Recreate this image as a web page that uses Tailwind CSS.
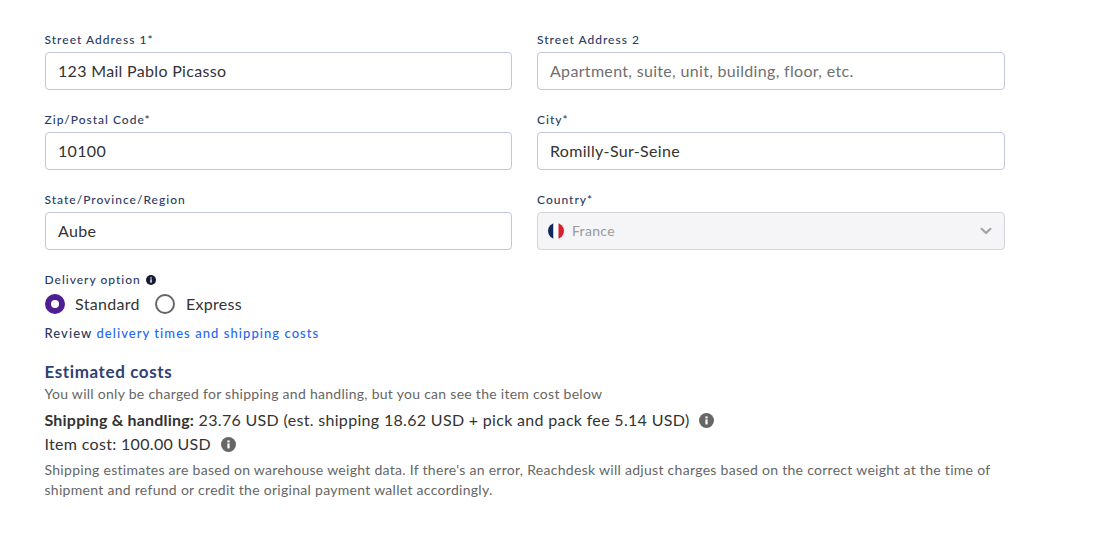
<!DOCTYPE html>
<html lang="en">

<head>
    <meta charset="UTF-8">
    <title>Delivery address</title>
    <script src="https://cdn.jsdelivr.net/npm/@tailwindcss/browser@4"></script>
</head>

<body class="bg-white font-['Lato',sans-serif] text-[#333333]">
    <div class="w-[1104px] h-[538px] overflow-hidden pl-[45px] pt-[32px]">
        <div class="w-[960px] grid grid-cols-[467px_468px] gap-x-[25px] gap-y-[22px]">
            <div>
                <label class="block h-[20px] -ml-[0.5px] text-[12px] leading-[15px] tracking-[1px] font-medium text-[#2a3a63]">Street Address 1*</label>
                <input value="123 Mail Pablo Picasso" class="w-full h-[38px] px-[12px] pb-[2px] border border-[#c1c7de] rounded-[4px] text-[16px] tracking-[0.32px] text-[#333333]">
            </div>
            <div>
                <label class="block h-[20px] text-[12px] leading-[15px] tracking-[1px] font-medium text-[#2a3a63]">Street Address 2</label>
                <input placeholder="Apartment, suite, unit, building, floor, etc." class="w-full h-[38px] px-[12px] pb-[2px] border border-[#c1c7de] rounded-[4px] text-[16px] tracking-[0.32px] placeholder:text-[#6f6f6f]">
            </div>
            <div>
                <label class="block h-[20px] -ml-[0.5px] text-[12px] leading-[15px] tracking-[1px] font-medium text-[#2a3a63]">Zip/Postal Code*</label>
                <input value="10100" class="w-full h-[38px] px-[12px] pb-[2px] border border-[#c1c7de] rounded-[4px] text-[16px] tracking-[0.32px] text-[#333333]">
            </div>
            <div>
                <label class="block h-[20px] text-[12px] leading-[15px] tracking-[1px] font-medium text-[#2a3a63]">City*</label>
                <input value="Romilly-Sur-Seine" class="w-full h-[38px] px-[12px] pb-[2px] border border-[#c1c7de] rounded-[4px] text-[16px] tracking-[0.32px] text-[#333333]">
            </div>
            <div>
                <label class="block h-[20px] -ml-[0.5px] text-[12px] leading-[15px] tracking-[1px] font-medium text-[#2a3a63]">State/Province/Region</label>
                <input value="Aube" class="w-full h-[38px] px-[12px] pb-[2px] border border-[#c1c7de] rounded-[4px] text-[16px] tracking-[0.32px] text-[#333333]">
            </div>
            <div>
                <label class="block h-[20px] text-[12px] leading-[15px] tracking-[1px] font-medium text-[#2a3a63]">Country*</label>
                <div class="h-[38px] pl-[10px] pr-[12px] flex items-center border border-[#d3d5da] rounded-[4px] bg-[#f5f5f7]">
                    <svg class="w-[16px] h-[16px] mr-[8px]" viewBox="0 0 16 16">
                        <clipPath id="flag"><circle cx="8" cy="8" r="8" /></clipPath>
                        <g clip-path="url(#flag)">
                            <rect width="5.5" height="16" fill="#0f2a5c" />
                            <rect x="5.5" width="5" height="16" fill="#ffffff" />
                            <rect x="10.5" width="5.5" height="16" fill="#d8202c" />
                        </g>
                    </svg>
                    <span class="text-[14px] tracking-[0.3px] text-[#9a9a9a] -mt-[1px]">France</span>
                    <svg class="ml-auto w-[12px] h-[8px]" viewBox="0 0 12 8" fill="none" stroke="#a3a3a3" stroke-width="2.2">
                        <path d="M1 1.2 6 6 11 1.2" />
                    </svg>
                </div>
            </div>
        </div>

        <div class="mt-[22px] -ml-[0.5px] flex items-center h-[16px] text-[12px] tracking-[1px] font-medium text-[#2a3a63]">
            Delivery option
            <svg class="w-[10px] h-[10px] ml-[5px]" viewBox="0 0 10 10">
                <circle cx="5" cy="5" r="5" fill="#161b33" />
                <rect x="4.3" y="4.3" width="1.4" height="3.4" fill="#ffffff" />
                <rect x="4.3" y="2.3" width="1.4" height="1.3" fill="#ffffff" />
            </svg>
        </div>
        <div class="mt-[6px] flex items-center h-[20px] text-[16px] tracking-[0.32px]">
            <span class="w-[20px] h-[20px] rounded-full border-[6px] border-[#4f1f91] bg-white"></span>
            <span class="ml-[10px]">Standard</span>
            <span class="ml-[15px] w-[20px] h-[20px] rounded-full border-2 border-[#666666] bg-white"></span>
            <span class="ml-[11px]">Express</span>
        </div>
        <p class="mt-[9px] -ml-[0.5px] text-[13px] leading-[20px] tracking-[1.06px] font-medium text-[#2a3a63]">Review <a class="text-[#2468f2]">delivery times and shipping costs</a></p>

        <h2 class="mt-[18px] -ml-[0.5px] text-[17px] leading-[22px] font-bold tracking-[0.6px] text-[#2f4272]">Estimated costs</h2>
        <p class="mt-[1px] -ml-[0.5px] text-[14px] leading-[20px] tracking-[0.28px] text-[#666666]">You will only be charged for shipping and handling, but you can see the item cost below</p>
        <div class="mt-[4px] -ml-[0.5px] flex items-center h-[24px] text-[16px] tracking-[0.32px]">
            <span><b class="font-bold tracking-[0.2px]">Shipping &amp; handling:</b> 23.76 USD (est. shipping 18.62 USD + pick and pack fee 5.14 USD)</span>
            <svg class="w-[15px] h-[15px] ml-[10px]" viewBox="0 0 15 15">
                <circle cx="7.5" cy="7.5" r="7.5" fill="#666666" />
                <rect x="6.4" y="6.4" width="2.2" height="5" fill="#ffffff" />
                <rect x="6.4" y="3.4" width="2.2" height="2" fill="#ffffff" />
            </svg>
        </div>
        <div class="-ml-[0.5px] flex items-center h-[24px] text-[16px] tracking-[0.32px]">
            <span>Item cost: 100.00 USD</span>
            <svg class="w-[15px] h-[15px] ml-[10px]" viewBox="0 0 15 15">
                <circle cx="7.5" cy="7.5" r="7.5" fill="#666666" />
                <rect x="6.4" y="6.4" width="2.2" height="5" fill="#ffffff" />
                <rect x="6.4" y="3.4" width="2.2" height="2" fill="#ffffff" />
            </svg>
        </div>
        <p class="mt-[4px] -ml-[0.5px] w-[960px] text-[14px] leading-[20px] tracking-[0.29px] text-[#666666]">Shipping estimates are based on warehouse weight data. If there's an error, Reachdesk will adjust charges based on the correct weight at the time of shipment and refund or credit the original payment wallet accordingly.</p>
    </div>
</body>

</html>
